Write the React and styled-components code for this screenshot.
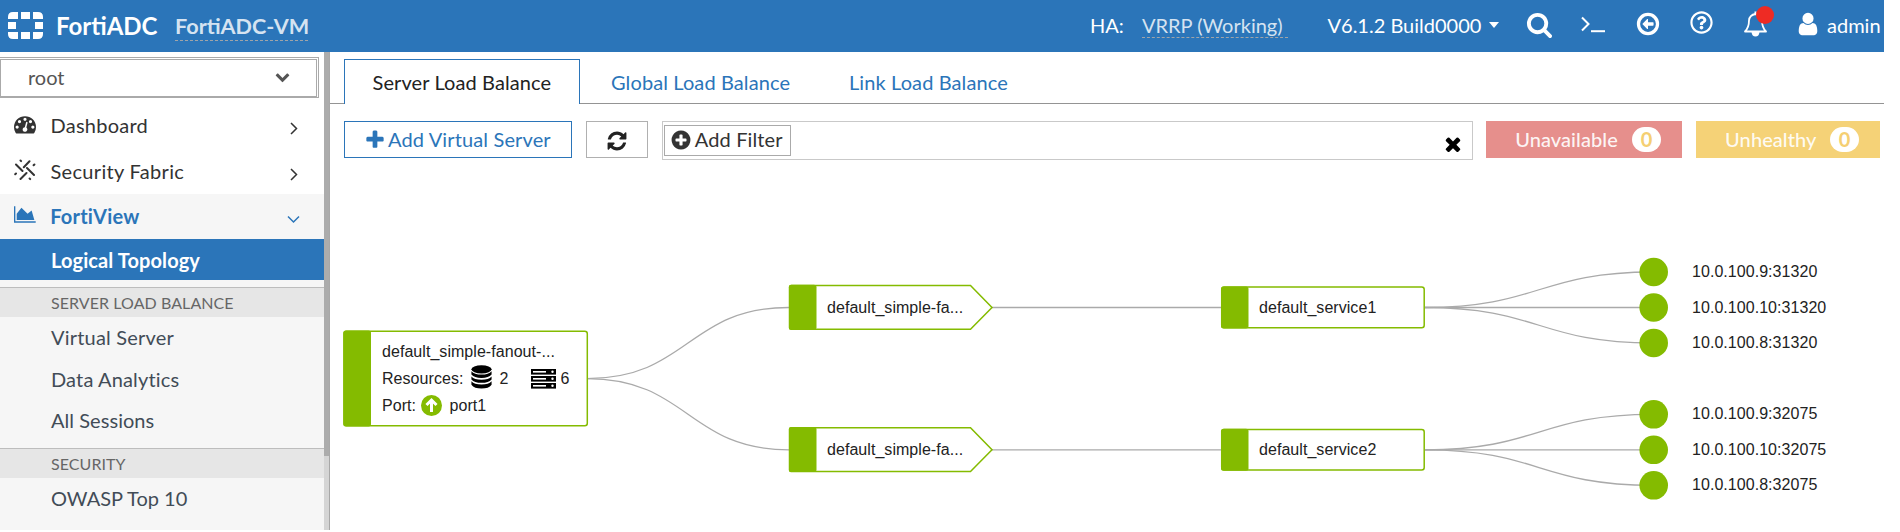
import React from "react";
import styled, { createGlobalStyle } from "styled-components";
import { FaRegQuestionCircle } from "react-icons/fa";

const BLUE = "#2b75b9";
const GREEN = "#84bb00";

const GlobalStyle = createGlobalStyle`
  * { box-sizing: border-box; }
  body { margin: 0; background: #fff; overflow: hidden; font-family: Lato, "Liberation Sans", sans-serif; font-size: 20px; }
`;

const Page = styled.div`
  width: 1884px;
  height: 530px;
  overflow: hidden;
  display: flex;
  flex-direction: column;
`;

const Header = styled.header`
  height: 52px;
  flex: none;
  background: ${BLUE};
  color: #fff;
  display: flex;
  align-items: center;
  padding-left: 8px;
  > svg { margin-bottom: 1px; }
`;
const Brand = styled.span`
  font-weight: 700;
  font-size: 24px;
  line-height: 30px;
  width: 119px;
  margin-left: 13px;
  white-space: nowrap;
`;
const Dashed = styled.span`
  color: #d5e3f1;
  font-weight: ${(p) => (p.$bold ? 700 : 400)};
  font-size: ${(p) => (p.$bold ? 21.6 : 20)}px;
  width: ${(p) => p.$w}px;
  white-space: nowrap;
  line-height: ${(p) => (p.$bold ? 27 : 24)}px;
  margin: ${(p) => (p.$bold ? "2px 0 0" : "0 0 1px")};
  border-bottom: 1px dashed #a0a4a8;
`;
const HeaderRight = styled.div`
  margin-left: auto;
  display: flex;
  align-items: center;
  height: 52px;
`;
const HeaderText = styled.span`
  width: ${(p) => p.$w}px;
  padding-left: ${(p) => p.$l || 0}px;
  white-space: nowrap;
  line-height: 25px;
  margin-bottom: 1px;
`;
const Caret = styled.i`
  border: 5px solid transparent;
  border-top: 6px solid #fff;
  border-bottom: 0;
  margin: 0 27px 3px 0;
`;
const HeaderIcon = styled.span`
  display: flex;
  position: relative;
  width: ${(p) => p.$w}px;
  height: 26px;
  align-items: flex-start;
  margin-bottom: 4px;
  svg { flex: none; }
`;
const Dot = styled.i`
  position: absolute;
  left: 13px;
  top: -5px;
  width: 18px;
  height: 18px;
  border-radius: 50%;
  background: #ee2b24;
`;

const Body = styled.div`
  flex: 1;
  display: flex;
  min-height: 0;
`;
const Sidebar = styled.aside`
  width: 330px;
  flex: none;
  display: flex;
`;
const Menu = styled.nav`
  width: 324px;
  background: #f6f6f6;
`;
const Track = styled.div`
  width: 6px;
  background: #d5d5d5;
  border-right: 1px solid #a8a8a8;
`;
const Thumb = styled.div`
  height: 404px;
  background: #acacac;
`;
const SelectWrap = styled.div`
  height: 51px;
  background: #fff;
  padding-top: 5px;
`;
const Select = styled.div`
  width: 319px;
  height: 41px;
  border: 1px solid #aaa;
  border-left: 0;
  padding: 1px 1px 0 0;
`;
const SelectInner = styled.div`
  height: 38px;
  border: 1px solid #aaa;
  display: flex;
  align-items: center;
  justify-content: space-between;
  padding: 0 26px 2px 27px;
  color: #555;
  svg { margin-bottom: 2px; }
`;
const MenuItem = styled.div`
  height: ${(p) => p.$h}px;
  background: ${(p) => (p.$active ? "#f6f6f6" : "#fff")};
  color: ${(p) => (p.$active ? BLUE : "#333")};
  font-weight: ${(p) => (p.$active ? 700 : 400)};
  letter-spacing: ${(p) => p.$ls}px;
  display: flex;
  align-items: center;
  padding: 0 24px 2px 14px;
  span { flex: 1; margin-left: 14.500px; }
  svg:first-child { margin-bottom: 2px; }
  svg:last-child { margin-top: 6px; }
`;
const Current = styled.div`
  height: 41px;
  background: ${BLUE};
  color: #fff;
  font-weight: 700;
  line-height: 43px;
  letter-spacing: 0.1px;
  padding-left: 51px;
  margin-bottom: 7px;
`;
const Section = styled.div`
  height: 30px;
  border-top: 1px solid #bdbdbd;
  background: #e6e6e6;
  color: #666;
  font-size: 16px;
  line-height: 29px;
  letter-spacing: 0.07px;
  padding-left: 51px;
`;
const SubItem = styled.div`
  height: ${(p) => p.$h}px;
  line-height: 40px;
  letter-spacing: ${(p) => p.$ls || 0}px;
  color: #424c57;
  padding-left: 51px;
`;

const Main = styled.main`
  flex: 1;
  min-width: 0;
`;
const Tabs = styled.div`
  display: flex;
  height: 52px;
  padding: 7px 0 0 14px;
  border-bottom: 1px solid #949494;
`;
const Tab = styled.div`
  height: 45px;
  line-height: 46px;
  letter-spacing: 0.1px;
  padding-left: ${(p) => (p.$active ? 27.5 : 31)}px;
  width: ${(p) => p.$w}px;
  white-space: nowrap;
  color: ${(p) => (p.$active ? "#222" : BLUE)};
  ${(p) => p.$active && `background: #fff; border: 1px solid ${BLUE}; border-bottom: 0; line-height: 44px;`}
`;
const Toolbar = styled.div`
  display: flex;
  align-items: flex-start;
  padding: 17px 4px 0 14px;
`;
const Button = styled.div`
  height: 37px;
  width: ${(p) => p.$w}px;
  margin-right: 14px;
  border: 1px solid ${(p) => (p.$primary ? BLUE : "#b0b0b0")};
  color: ${(p) => (p.$primary ? BLUE : "#222")};
  display: flex;
  align-items: center;
  justify-content: center;
  gap: 2px;
  letter-spacing: 0.13px;
  white-space: nowrap;
  svg { margin-top: ${(p) => (p.$primary ? 1 : 2)}px; }
  span { margin: 0 1px 1px 0; }
`;
const FilterBar = styled.div`
  height: 39px;
  width: 812px;
  margin-right: 13px;
  border: 1px solid #c9c9c9;
  display: flex;
  justify-content: space-between;
  padding: 3px 8px 0 1px;
`;
const FilterTag = styled.div`
  width: 127px;
  height: 31px;
  border: 1px solid #aaa;
  color: #333;
  display: flex;
  align-items: center;
  padding: 0 0 3px 5px;
  gap: 3px;
  letter-spacing: 0.13px;
  white-space: nowrap;
  svg { margin-top: 2px; }
`;
const Clear = styled.span`
  display: flex;
  padding-top: 8px;
`;
const Status = styled.div`
  width: ${(p) => p.$w}px;
  height: 37px;
  margin-right: ${(p) => p.$mr}px;
  background: ${(p) => p.$bg};
  color: rgba(255, 255, 255, 0.92);
  display: flex;
  align-items: center;
  padding: 0 0 2px 29px;
  font-weight: 500;
  letter-spacing: 0.07px;
  b {
    margin: 2px 21px 0 auto;
    width: 29px;
    height: 25px;
    border-radius: 12.5px;
    background: #fff;
    color: #f5cf72;
    text-align: center;
    line-height: 24px;
  }
`;

const Canvas = styled.div`
  position: relative;
  height: 370px;
  font-family: "Liberation Sans", Arial, sans-serif;
  font-size: 16px;
  letter-spacing: 0.05px;
  color: #222;
`;
const Links = styled.svg`
  position: absolute;
  left: 0;
  top: 0;
`;
const Label = styled.div`
  position: absolute;
  left: ${(p) => p.$x - 330}px;
  top: ${(p) => p.$y - 160 - 10}px;
  height: 20px;
  line-height: 20px;
  white-space: nowrap;
  display: flex;
  align-items: center;
`;

const Fa = ({ d, size = 20, w = 1792, color = "currentColor", children }) => (
  <svg width={(size * w) / 1792} height={size} viewBox={`0 0 ${w} 1792`} fill={color}>
    {d && <path d={d} />}
    {children}
  </svg>
);

const PLUS = "M1600 736v192q0 40-28 68t-68 28h-416v416q0 40-28 68t-68 28h-192q-40 0-68-28t-28-68v-416h-416q-40 0-68-28t-28-68v-192q0-40 28-68t68-28h416v-416q0-40 28-68t68-28h192q40 0 68 28t28 68v416h416q40 0 68 28t28 68z";
const TIMES = "M1490 1322q0 40-28 68l-136 136q-28 28-68 28t-68-28l-294-294-294 294q-28 28-68 28t-68-28l-136-136q-28-28-28-68t28-68l294-294-294-294q-28-28-28-68t28-68l136-136q28-28 68-28t68 28l294 294 294-294q28-28 68-28t68 28l136 136q28 28 28 68t-28 68l-294 294 294 294q28 28 28 68z";
const PLUS_CIRCLE = "M1344 960v-128q0-26-19-45t-45-19h-256v-256q0-26-19-45t-45-19h-128q-26 0-45 19t-19 45v256h-256q-26 0-45 19t-19 45v128q0 26 19 45t45 19h256v256q0 26 19 45t45 19h128q26 0 45-19t19-45v-256h256q26 0 45-19t19-45zm320-64q0 209-103 385.500t-279.500 279.500-385.500 103-385.500-103-279.500-279.500-103-385.500 103-385.500 279.500-279.500 385.500-103 385.500 103 279.500 279.500 103 385.500z";
const REFRESH = "M1639 1056q0 5-1 7-64 268-268 434.500t-478 166.500q-146 0-282.500-55t-243.500-157l-129 129q-19 19-45 19t-45-19-19-45v-448q0-26 19-45t45-19h448q26 0 45 19t19 45-19 45l-137 137q71 66 161 102t187 36q134 0 250-65t186-179q11-17 53-117 8-23 30-23h192q13 0 22.500 9.500t9.500 22.500zm25-800v448q0 26-19 45t-45 19h-448q-26 0-45-19t-19-45 19-45l138-138q-148-137-349-137-134 0-250 65t-186 179q-11 17-53 117-8 23-30 23h-199q-13 0-22.500-9.500t-9.500-22.500v-7q65-268 270-434.500t480-166.500q146 0 284 55.500t245 156.500l130-129q19-19 45-19t45 19 19 45z";
const SEARCH = "M1216 832q0-185-131.500-316.500t-316.500-131.500-316.500 131.500-131.500 316.500 131.500 316.500 316.500 131.500 316.500-131.500 131.500-316.500zm512 832q0 52-38 90t-90 38q-54 0-90-38l-343-342q-179 124-399 124-143 0-273.500-55.500t-225-150-150-225-55.500-273.500 55.500-273.500 150-225 225-150 273.500-55.500 273.500 55.500 225 150 150 225 55.500 273.500q0 220-124 399l343 343q37 37 37 90z";
const LEFT = "M1280 832v128q0 26-19 45t-45 19h-320v192q0 13-9.500 22.500t-22.500 9.500q-12 0-24-10l-319-319q-9-9-9-23t9-23l320-320q9-9 23-9 13 0 22.500 9.500t9.500 22.500v192h352q32 0 32 64z";
const USER = "M1536 1399q0 109-62.500 187t-150.500 78h-854q-88 0-150.500-78t-62.500-187q0-85 8.500-160.500t31.500-152 58.500-131 94-89 134.500-34.500q131 128 313 128t313-128q76 0 134.500 34.500t94 89 58.500 131 31.500 152 8.500 160.500zm-256-887q0 159-112.500 271.500t-271.500 112.500-271.500-112.500-112.500-271.500 112.500-271.500 271.500-112.500 271.500 112.500 112.500 271.500z";
const GAUGE = "M384 1152q0-53-37.500-90.500t-90.500-37.500-90.500 37.500-37.500 90.500 37.500 90.500 90.500 37.500 90.500-37.500 37.500-90.500zm192-448q0-53-37.500-90.500t-90.500-37.500-90.500 37.500-37.500 90.500 37.500 90.500 90.500 37.500 90.500-37.500 37.500-90.500zm428 481l101-382q6-26-7.500-48.500t-38.500-29.500-48 6.500-30 39.500l-101 382q-60 5-107 43.500t-63 98.500q-20 77 20 146t117 89 146-20 89-117q16-60-6-117t-72-91zm660-33q0-53-37.500-90.500t-90.500-37.500-90.500 37.500-37.500 90.500 37.500 90.500 90.500 37.500 90.500-37.500 37.500-90.500zm-640-640q0-53-37.500-90.500t-90.500-37.500-90.500 37.500-37.500 90.500 37.500 90.500 90.500 37.500 90.500-37.500 37.500-90.500zm448 192q0-53-37.500-90.500t-90.500-37.500-90.500 37.500-37.500 90.500 37.500 90.500 90.500 37.500 90.500-37.500 37.500-90.500zm320 448q0 261-141 483-19 29-54 29h-1402q-35 0-54-29-141-221-141-483 0-182 71-348t191-286 286-191 348-71 348 71 286 191 191 286 71 348z";
const AREA = "M2048 1536v128h-2048v-1536h128v1408h1920zm-384-1024l256 896h-1664v-576l448-576 576 576z";
const DOWN = "M1683 808l-742 741q-19 19-45 19t-45-19l-742-741q-19-19-19-45.500t19-45.500l166-165q19-19 45-19t45 19l531 531 531-531q19-19 45-19t45 19l166 165q19 19 19 45.500t-19 45.500z";

const Logo = () => (
  <svg width="35" height="27" viewBox="0 0 35 27" fill="#fff">
    <path d="M13 0h9v7h-9zM13 20h9v7h-9zM0 10h8v7H0zM27 10h8v7h-8zM10 0v7H0V5q0-5 5-5zM25 0h5q5 0 5 5v2H25zM0 20h10v7H5q-5 0-5-5zM25 20h10v2q0 5-5 5h-5z" />
  </svg>
);

const Fabric = () => (
  <svg width="22" height="22" viewBox="0 0 22 22" stroke="#333" strokeWidth="2" strokeLinecap="round" fill="none">
    <path d="M9.800 8.200L15.500 2.200M2 5.500L8.500 12M13 9L20 16M6.500 20L12.500 14M6.500 1.500l.6.600M19.600 6.300l.8-.8M1.200 15.300l.8-.8M15.600 19.500l.6.600" />
  </svg>
);

const Chevron = ({ down }) => (
  <svg width="13" height="14" viewBox="0 0 13 14" fill="none" stroke="currentColor" strokeWidth="1.500">
    <path d={down ? "M1 4.500l5.500 5.500L12 4.500" : "M4 2l5.500 5.500L4 13"} />
  </svg>
);

const Prompt = () => (
  <svg width="25" height="26" viewBox="0 0 25 26" fill="none" stroke="#fff">
    <path d="M1 6.500l6.500 6.500L1 19.500" strokeWidth="2" />
    <path d="M10 20.200h14" strokeWidth="2" />
  </svg>
);

const Bell = () => (
  <svg width="25" height="26" viewBox="0 0 25 26">
    <path d="M2 20.500Q6 16.500 6 9.500Q6.500 4 12.500 3Q18.500 4 19 9.500Q19 16.500 23 20.500Z" fill="none" stroke="#fff" strokeWidth="1.800" strokeLinejoin="round" />
    <path d="M11.500 .5h2v3h-2zM8.500 21h8q-.5 4.500-4 4.500t-4-4.500z" fill="#fff" />
  </svg>
);

const Database = () => (
  <svg width="21" height="24" viewBox="0 0 21 25">
    <ellipse cx="10.500" cy="4.500" rx="10.500" ry="4.300" />
    <path d="M0 6.500Q3 10 10.500 10T21 6.500V10q-3 3.500-10.500 3.500T0 10zM0 12Q3 15.300 10.500 15.300T21 12v3q-3 3.500-10.500 3.500T0 15zM0 17Q3 20.300 10.500 20.300T21 17v3.500Q18 24.500 10.500 24.500T0 20.500z" />
  </svg>
);

const Servers = () => (
  <svg width="25" height="20" viewBox="0 0 25 20">
    {[0, 7, 14].map((y) => (
      <g key={y}>
        <rect y={y} width="25" height="5.600" />
        <rect x="2" y={y + 2} width="13" height="1.600" fill="#fff" />
        <circle cx="21.500" cy={y + 2.8} r="1.200" fill="#fff" />
      </g>
    ))}
  </svg>
);

const Arrow = styled.svg`
  margin: 0 7.5px 0 5px;
`;
const Count = styled.span`
  margin: 0 ${(p) => p.$r || 0}px 0 ${(p) => p.$l}px;
`;
const IconSlot = styled.span`
  display: flex;
  margin-left: ${(p) => p.$l || 0}px;
  margin-bottom: 3px;
`;

const rows = [307.5, 449.8];
const leafOffset = [-35.5, 0, 35.5];
const curve = (x1, y1, x2, y2) => `M${x1} ${y1}C${(x1 + x2) / 2} ${y1} ${(x1 + x2) / 2} ${y2} ${x2} ${y2}`;
const leaves = [
  ["10.0.100.9:31320", "10.0.100.10:31320", "10.0.100.8:31320"],
  ["10.0.100.9:32075", "10.0.100.10:32075", "10.0.100.8:32075"],
];

const Topology = () => (
  <Canvas>
    <Links width="1554" height="370" viewBox="330 160 1554 370">
      <g fill="none" stroke="#aaa" strokeWidth="1.300">
        {rows.map((y) => (
          <React.Fragment key={y}>
            <path d={curve(587, 378.6, 789, y)} />
            <path d={`M992 ${y}H1221`} />
            {leafOffset.map((o) => (
              <path key={o} d={curve(1425, y, 1653, y + o)} />
            ))}
          </React.Fragment>
        ))}
      </g>
      <g fill="#fff" stroke={GREEN} strokeWidth="1.500">
        <rect x="344" y="331.300" width="243.300" height="94.500" rx="2.500" />
        {rows.map((y) => (
          <React.Fragment key={y}>
            <path d={`M791 ${y - 22}H970.500L992 ${y}L970.500 ${y + 21.7}H791q-1.500 0-1.500-1.500V${y - 20.5}q0-1.500 1.500-1.500z`} />
            <rect x="1221.700" y={y - 20.4} width="202.500" height="40.700" rx="2.500" />
          </React.Fragment>
        ))}
      </g>
      <g fill={GREEN}>
        <rect x="343.300" y="330.600" width="27.700" height="96" rx="2.500" />
        {rows.map((y) => (
          <React.Fragment key={y}>
            <rect x="789" y={y - 22.7} width="27.500" height="45" rx="2.500" />
            <rect x="1221" y={y - 21} width="27.500" height="42" rx="2.500" />
            {leafOffset.map((o) => (
              <circle key={o} cx="1653.700" cy={y + o} r="14.300" />
            ))}
          </React.Fragment>
        ))}
      </g>
    </Links>
    <Label $x={382} $y={351.5}>default_simple-fanout-...</Label>
    <Label $x={382} $y={378.5}>
      Resources:
      <IconSlot $l={8}><Database /></IconSlot>
      <Count $l={7} $r={23}>2</Count>
      <Servers />
      <Count $l={4}>6</Count>
    </Label>
    <Label $x={382} $y={405.5}>
      Port:
      <Arrow width="21" height="21" viewBox="0 0 21 21">
        <circle cx="10.500" cy="10.500" r="10.500" fill={GREEN} />
        <path d="M10.500 17V6M5.500 10l5-5 5 5" fill="none" stroke="#fff" strokeWidth="3" />
      </Arrow>
      port1
    </Label>
    {rows.map((y, i) => (
      <React.Fragment key={y}>
        <Label $x={827} $y={y}>default_simple-fa...</Label>
        <Label $x={1259} $y={y}>default_service{i + 1}</Label>
        {leaves[i].map((t, j) => (
          <Label key={t} $x={1692} $y={y + leafOffset[j]}>{t}</Label>
        ))}
      </React.Fragment>
    ))}
  </Canvas>
);

export default function App() {
  return (
    <>
      <GlobalStyle />
      <Page>
        <Header>
          <Logo />
          <Brand>FortiADC</Brand>
          <Dashed $bold $w={133}>FortiADC-VM</Dashed>
          <HeaderRight>
            <HeaderText $w={52}>HA:</HeaderText>
            <Dashed $w={146}>VRRP (Working)</Dashed>
            <HeaderText $w={201} $l={39.5}>V6.1.2 Build0000</HeaderText>
            <Caret />
            <HeaderIcon $w={55}><Fa d={SEARCH} size={27} /></HeaderIcon>
            <HeaderIcon $w={54}><Prompt /></HeaderIcon>
            <HeaderIcon $w={55}>
              <Fa size={26} d={LEFT}><circle cx="896" cy="896" r="656" fill="none" stroke="#fff" strokeWidth="224" /></Fa>
            </HeaderIcon>
            <HeaderIcon $w={53}><FaRegQuestionCircle size={23} /></HeaderIcon>
            <HeaderIcon $w={52}><Bell /><Dot /></HeaderIcon>
            <HeaderIcon $w={32}><Fa d={USER} size={26} /></HeaderIcon>
            <HeaderText $w={57}>admin</HeaderText>
          </HeaderRight>
        </Header>
        <Body>
          <Sidebar>
            <Menu>
              <SelectWrap>
                <Select>
                  <SelectInner>root<Fa d={DOWN} size={15} /></SelectInner>
                </Select>
              </SelectWrap>
              <MenuItem $h={46} $ls={0.25}><Fa d={GAUGE} size={22} /><span>Dashboard</span><Chevron /></MenuItem>
              <MenuItem $h={45} $ls={0.32}><Fabric /><span>Security Fabric</span><Chevron /></MenuItem>
              <MenuItem $h={45} $ls={0.2} $active><Fa d={AREA} w={2048} size={19} /><span>FortiView</span><Chevron down /></MenuItem>
              <Current>Logical Topology</Current>
              <Section>SERVER LOAD BALANCE</Section>
              <SubItem $h={42} $ls={0.2}>Virtual Server</SubItem>
              <SubItem $h={41} $ls={0.15}>Data Analytics</SubItem>
              <SubItem $h={48} $ls={0.05}>All Sessions</SubItem>
              <Section>SECURITY</Section>
              <SubItem $h={42}>OWASP Top 10</SubItem>
            </Menu>
            <Track><Thumb /></Track>
          </Sidebar>
          <Main>
            <Tabs>
              <Tab $active $w={236}>Server Load Balance</Tab>
              <Tab $w={238}>Global Load Balance</Tab>
              <Tab $w={200}>Link Load Balance</Tab>
            </Tabs>
            <Toolbar>
              <Button $primary $w={228}><Fa d={PLUS} size={22} /><span>Add Virtual Server</span></Button>
              <Button $w={62}><Fa d={REFRESH} size={22} /></Button>
              <FilterBar>
                <FilterTag><Fa d={PLUS_CIRCLE} size={22} />Add Filter</FilterTag>
                <Clear><Fa d={TIMES} size={22} color="#000" /></Clear>
              </FilterBar>
              <Status $bg="#e68f8c" $w={196} $mr={14}>Unavailable<b>0</b></Status>
              <Status $bg="#f5d277" $w={184} $mr={0}>Unhealthy<b>0</b></Status>
            </Toolbar>
            <Topology />
          </Main>
        </Body>
      </Page>
    </>
  );
}
